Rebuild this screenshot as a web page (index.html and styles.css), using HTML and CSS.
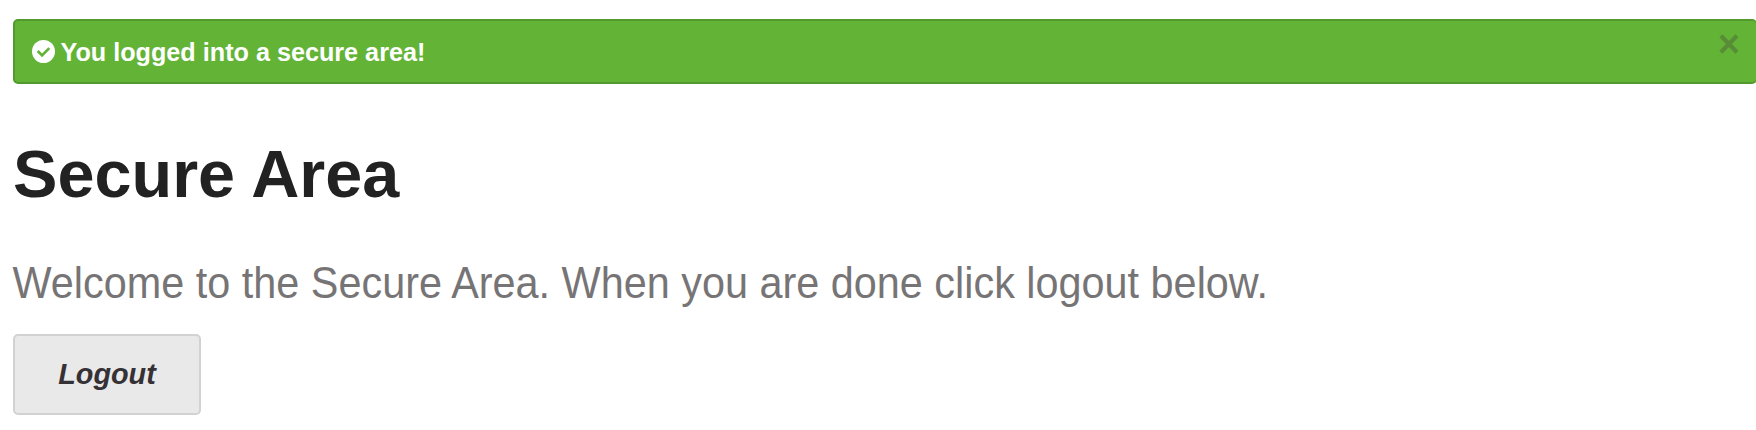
FILE: index.html
```html
<!DOCTYPE html>
<html lang="en">
<head>
<meta charset="utf-8">
<title>Secure Area</title>
<link rel="stylesheet" href="styles.css">
</head>
<body>
<div class="alert">
  <svg class="check" viewBox="0 0 24 24"><circle cx="12" cy="12" r="12" fill="#fff"/><path d="M6 11.500l4.500 4.500 7.500-7.500" fill="none" stroke="#63b436" stroke-width="2.800"/></svg>
  <span class="message">You logged into a secure area!</span>
  <a class="close">×</a>
</div>
<h1 class="title">Secure Area</h1>
<p class="subheader">Welcome to the Secure Area. When you are done click logout below.</p>
<a class="button">Logout</a>
</body>
</html>
```
FILE: styles.css
```css
*{box-sizing:border-box}
body{margin:0;padding:19px 0 0 13px;height:430px;overflow:hidden;background:#fff;font-family:"Liberation Sans",Arial,sans-serif}
.alert{display:flex;align-items:center;width:1744px;height:65px;padding-left:17px;background:#63b436;border:2px solid #539a2e;border-right-width:1px;border-radius:5px;color:#fff;font-size:25.2px;font-weight:bold}
.check{width:23px;height:23px;margin-right:5.5px}
.message{white-space:nowrap;transform:translateY(.5px) scaleY(1.04)}
.close{margin-left:auto;margin-right:16px;margin-top:-15px;color:#588c36;font-size:38px;line-height:38px}
.title{margin:55px 0 0;font-size:66.6px;line-height:70px;color:#222}
.subheader{margin:44px 0 0 -0.5px;font-size:41.4px;line-height:60px;color:#777476;white-space:nowrap;transform:translateY(.3px) scaleY(1.06)}
.button{display:flex;align-items:center;justify-content:center;width:188px;height:81px;margin-top:21px;padding-bottom:1px;background:#e9e9e9;border:2px solid #d2d2d2;border-radius:5px;color:#353135;font-size:28.8px;font-weight:bold;font-style:italic}
```
